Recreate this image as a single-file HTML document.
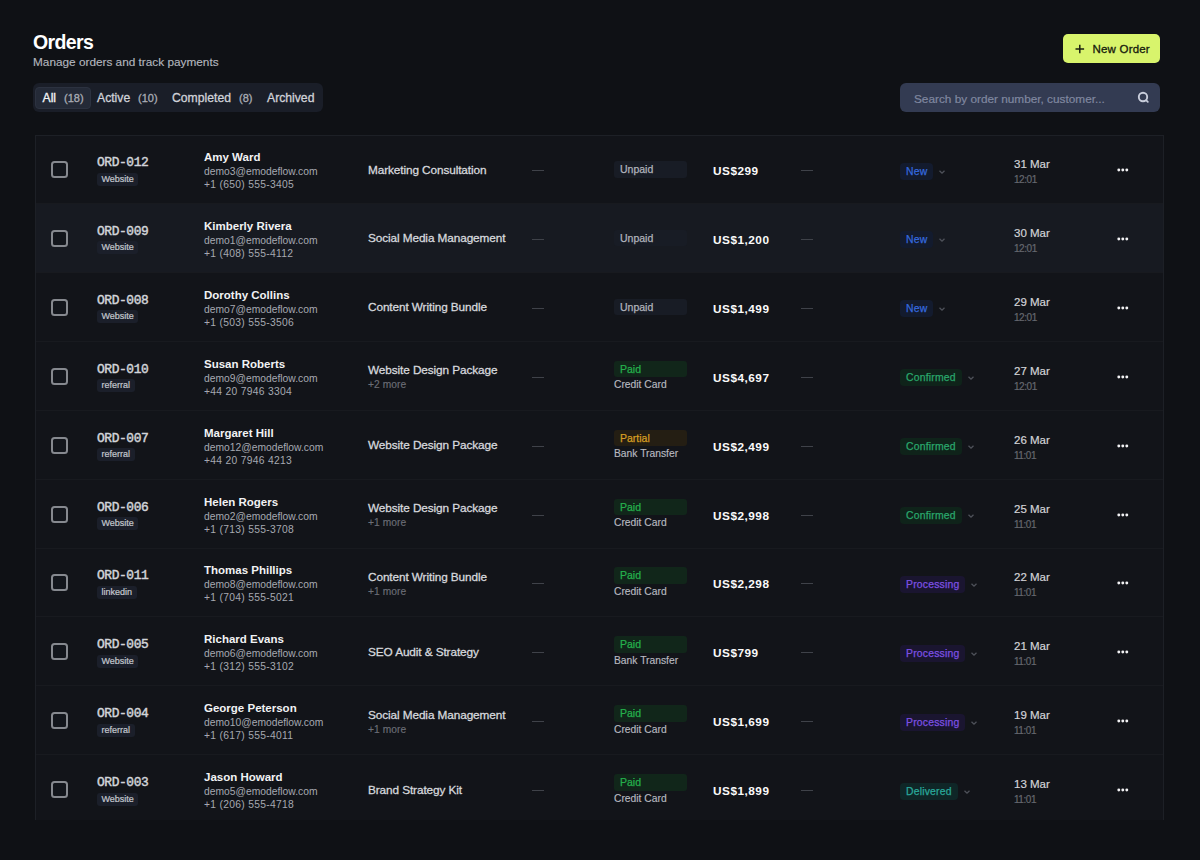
<!DOCTYPE html>
<html><head><meta charset="utf-8"><style>
*{margin:0;padding:0;box-sizing:border-box}
html,body{width:1200px;height:860px;overflow:hidden;background:#0f1115;font-family:"Liberation Sans",sans-serif;position:relative}
.title{position:absolute;left:33px;top:29.5px;font-size:19.5px;letter-spacing:-0.6px;font-weight:bold;color:#fff;line-height:24px}
.sub{position:absolute;left:33px;top:55px;font-size:11.8px;color:#b3b6bd;line-height:14px;-webkit-text-stroke:0.15px #b3b6bd}
.tabs{position:absolute;left:33px;top:83px;width:290px;height:29px;background:#1a1e28;border-radius:6px}
.tab{position:absolute;top:3px;height:23px;line-height:24px;font-size:12.2px;color:#d0d2d8;white-space:nowrap;-webkit-text-stroke:0.3px #d0d2d8}
.tab.active{top:4px;height:22px;background:#242a37;border:1px solid #2c3240;border-radius:4px;line-height:20px;color:#f4f5f7;-webkit-text-stroke:0.3px #f4f5f7}
.tc{color:#a9acb5;-webkit-text-stroke:0.3px #a9acb5;font-size:11px;position:absolute;top:0}
.btn{position:absolute;left:1063px;top:34px;width:96.5px;height:29px;background:#d8f46c;border-radius:5px}
.btn span{position:absolute;left:29.5px;top:8px;font-size:11.5px;letter-spacing:0.2px;line-height:15px;color:#161a0c;-webkit-text-stroke:0.3px #161a0c}
.search{position:absolute;left:900px;top:83px;width:260px;height:29px;background:#333b52;border-radius:6px}
.search span{position:absolute;left:14px;top:9px;font-size:11.8px;line-height:14px;color:#8088a0;-webkit-text-stroke:0.2px #8088a0}
.table{position:absolute;left:35px;top:135px;width:1129px;height:685px;border:1px solid #1d2026;border-bottom:none;overflow:hidden;background:#121419}
.row{position:absolute;left:-1px;width:1128px;height:69px;border-bottom:1px solid #181a1f}
.in{position:absolute;left:0;top:1px;width:1128px;height:69px}
.row.hover{background:#171a21}
.cb{position:absolute;left:16px;top:25px;width:17px;height:17px;border:2px solid #86898f;border-radius:3.5px;background:#13161c}
.oid{position:absolute;left:62px;top:20px;font-family:"Liberation Mono",monospace;font-weight:normal;font-size:12.9px;letter-spacing:-0.4px;line-height:14px;color:#d2d4d9;-webkit-text-stroke:0.45px #d2d4d9}
.src{position:absolute;left:62px;top:36.5px;height:13px;padding:0 4.5px;font-size:9px;line-height:13.5px;color:#c4c7ce;-webkit-text-stroke:0.2px #c4c7ce;background:#1b1f2a;border-radius:3px}
.cust{position:absolute;left:169px;top:14px}
.nm{font-size:11.5px;font-weight:bold;color:#f1f2f4;line-height:15px}
.em{font-size:10.3px;color:#a6a9b1;line-height:13px}
.ph{font-size:10.3px;color:#a6a9b1;line-height:13.5px;letter-spacing:0.3px}
.prod{position:absolute;left:333px;top:26.5px;font-size:11.8px;letter-spacing:-0.1px;line-height:14px;color:#d6d8dd;white-space:nowrap;-webkit-text-stroke:0.3px #d6d8dd}
.prod.two{top:20.5px}
.more{font-size:10.2px;letter-spacing:0.1px;color:#6b6e76;line-height:16px;-webkit-text-stroke:0.15px #6b6e76}
.dash{position:absolute;top:34px;width:12px;height:1px;background:#3f4249}
.d1{left:497px}.d2{left:766px}
.pay{position:absolute;left:579px;top:25px}
.pay.two{top:18px}
.pb{display:block;width:73px;height:16px;border-radius:3px;font-size:10.5px;line-height:16.5px;height:16.5px;padding-left:6px;-webkit-text-stroke:0.25px currentColor}
.pb.unpaid{background:#181c25;color:#b0b3bb}
.pb.paid{background:#11261a;color:#25b04c}
.pb.partial{background:#241e13;color:#d69f22}
.method{font-size:10.3px;line-height:14px;color:#b8bac0;margin-top:1px;-webkit-text-stroke:0.15px #b8bac0}
.amt{position:absolute;left:678px;top:28px;font-size:11.8px;letter-spacing:0.5px;font-weight:bold;color:#fafafa;line-height:15px}
.st{position:absolute;left:865px;top:26.5px;height:18px;white-space:nowrap}
.sb{display:inline-block;height:17px;line-height:18px;font-size:10.4px;letter-spacing:0.2px;padding:0 6px;border-radius:4px;vertical-align:top;-webkit-text-stroke:0.25px currentColor}
.sb.new{background:#131b2e;color:#3569de}
.sb.confirmed{background:#0f231a;color:#2aa76c}
.sb.processing{background:#1a1530;color:#7d50e2}
.sb.delivered{background:#0f2627;color:#2aa89a}
.chev{display:inline-block;vertical-align:top;margin-top:6px;margin-left:5px}
.dt{position:absolute;left:979px;top:22px}
.date{font-size:11.5px;color:#d2d3d7;line-height:13px;-webkit-text-stroke:0.2px #d2d3d7}
.time{font-size:10px;letter-spacing:-0.45px;color:#65686f;line-height:17.5px;-webkit-text-stroke:0.2px #65686f}
.dots{position:absolute;left:1080px;top:31px}

</style></head><body>
<div class="title">Orders</div>
<div class="sub">Manage orders and track payments</div>
<div class="tabs">
<div class="tab active" style="left:2px;width:56px"><span class="tl" style="position:absolute;left:6.5px">All</span><span class="tc" style="left:28px">(18)</span></div>
<div class="tab" style="left:64px"><span class="tl">Active</span><span class="tc" style="left:41px">(10)</span></div>
<div class="tab" style="left:139px"><span class="tl">Completed</span><span class="tc" style="left:67px">(8)</span></div>
<div class="tab" style="left:234px"><span class="tl">Archived</span></div>
</div>
<div class="btn"><svg width="10" height="10" viewBox="0 0 10 10" style="position:absolute;left:12px;top:9.5px"><path d="M4.8 0.7V9.3M0.5 5H9.1" stroke="#1a1f10" stroke-width="1.5"/></svg><span>New Order</span></div>
<div class="search"><span>Search by order number, customer...</span><svg width="14" height="14" viewBox="0 0 14 14" style="position:absolute;left:237px;top:8px"><circle cx="6" cy="6" r="4.2" fill="none" stroke="#c9cedc" stroke-width="1.9"/><path d="M9.3 9.3L10.8 10.8" stroke="#c9cedc" stroke-width="1.8" stroke-linecap="round"/></svg></div>
<div class="table">
<div class="row" style="top:-1.0px"><div class="in">
<div class="cb"></div>
<div class="oid">ORD-012</div><div class="src">Website</div>
<div class="cust"><div class="nm">Amy Ward</div><div class="em">demo3@emodeflow.com</div><div class="ph">+1 (650) 555-3405</div></div>
<div class="prod">Marketing Consultation</div>
<div class="dash d1"></div>
<div class="pay"><span class="pb unpaid">Unpaid</span></div>
<div class="amt">US$299</div>
<div class="dash d2"></div>
<div class="st"><span class="sb new">New</span><svg class="chev" width="8" height="6" viewBox="0 0 8 6"><path d="M1.5 1.8 L4 4.2 L6.5 1.8" fill="none" stroke="#4f525a" stroke-width="1.3"/></svg></div>
<div class="dt"><div class="date">31 Mar</div><div class="time">12:01</div></div>
<svg class="dots" width="14" height="6" viewBox="0 0 14 6"><circle cx="3.8" cy="3" r="1.45" fill="#f2f2f4"/><circle cx="7.8" cy="3" r="1.45" fill="#f2f2f4"/><circle cx="11.8" cy="3" r="1.45" fill="#f2f2f4"/></svg>
</div></div><div class="row hover" style="top:67.9px"><div class="in">
<div class="cb"></div>
<div class="oid">ORD-009</div><div class="src">Website</div>
<div class="cust"><div class="nm">Kimberly Rivera</div><div class="em">demo1@emodeflow.com</div><div class="ph">+1 (408) 555-4112</div></div>
<div class="prod">Social Media Management</div>
<div class="dash d1"></div>
<div class="pay"><span class="pb unpaid">Unpaid</span></div>
<div class="amt">US$1,200</div>
<div class="dash d2"></div>
<div class="st"><span class="sb new">New</span><svg class="chev" width="8" height="6" viewBox="0 0 8 6"><path d="M1.5 1.8 L4 4.2 L6.5 1.8" fill="none" stroke="#4f525a" stroke-width="1.3"/></svg></div>
<div class="dt"><div class="date">30 Mar</div><div class="time">12:01</div></div>
<svg class="dots" width="14" height="6" viewBox="0 0 14 6"><circle cx="3.8" cy="3" r="1.45" fill="#f2f2f4"/><circle cx="7.8" cy="3" r="1.45" fill="#f2f2f4"/><circle cx="11.8" cy="3" r="1.45" fill="#f2f2f4"/></svg>
</div></div><div class="row" style="top:136.8px"><div class="in">
<div class="cb"></div>
<div class="oid">ORD-008</div><div class="src">Website</div>
<div class="cust"><div class="nm">Dorothy Collins</div><div class="em">demo7@emodeflow.com</div><div class="ph">+1 (503) 555-3506</div></div>
<div class="prod">Content Writing Bundle</div>
<div class="dash d1"></div>
<div class="pay"><span class="pb unpaid">Unpaid</span></div>
<div class="amt">US$1,499</div>
<div class="dash d2"></div>
<div class="st"><span class="sb new">New</span><svg class="chev" width="8" height="6" viewBox="0 0 8 6"><path d="M1.5 1.8 L4 4.2 L6.5 1.8" fill="none" stroke="#4f525a" stroke-width="1.3"/></svg></div>
<div class="dt"><div class="date">29 Mar</div><div class="time">12:01</div></div>
<svg class="dots" width="14" height="6" viewBox="0 0 14 6"><circle cx="3.8" cy="3" r="1.45" fill="#f2f2f4"/><circle cx="7.8" cy="3" r="1.45" fill="#f2f2f4"/><circle cx="11.8" cy="3" r="1.45" fill="#f2f2f4"/></svg>
</div></div><div class="row" style="top:205.7px"><div class="in">
<div class="cb"></div>
<div class="oid">ORD-010</div><div class="src">referral</div>
<div class="cust"><div class="nm">Susan Roberts</div><div class="em">demo9@emodeflow.com</div><div class="ph">+44 20 7946 3304</div></div>
<div class="prod two">Website Design Package<div class="more">+2 more</div></div>
<div class="dash d1"></div>
<div class="pay two"><span class="pb paid">Paid</span><div class="method">Credit Card</div></div>
<div class="amt">US$4,697</div>
<div class="dash d2"></div>
<div class="st"><span class="sb confirmed">Confirmed</span><svg class="chev" width="8" height="6" viewBox="0 0 8 6"><path d="M1.5 1.8 L4 4.2 L6.5 1.8" fill="none" stroke="#4f525a" stroke-width="1.3"/></svg></div>
<div class="dt"><div class="date">27 Mar</div><div class="time">12:01</div></div>
<svg class="dots" width="14" height="6" viewBox="0 0 14 6"><circle cx="3.8" cy="3" r="1.45" fill="#f2f2f4"/><circle cx="7.8" cy="3" r="1.45" fill="#f2f2f4"/><circle cx="11.8" cy="3" r="1.45" fill="#f2f2f4"/></svg>
</div></div><div class="row" style="top:274.6px"><div class="in">
<div class="cb"></div>
<div class="oid">ORD-007</div><div class="src">referral</div>
<div class="cust"><div class="nm">Margaret Hill</div><div class="em">demo12@emodeflow.com</div><div class="ph">+44 20 7946 4213</div></div>
<div class="prod">Website Design Package</div>
<div class="dash d1"></div>
<div class="pay two"><span class="pb partial">Partial</span><div class="method">Bank Transfer</div></div>
<div class="amt">US$2,499</div>
<div class="dash d2"></div>
<div class="st"><span class="sb confirmed">Confirmed</span><svg class="chev" width="8" height="6" viewBox="0 0 8 6"><path d="M1.5 1.8 L4 4.2 L6.5 1.8" fill="none" stroke="#4f525a" stroke-width="1.3"/></svg></div>
<div class="dt"><div class="date">26 Mar</div><div class="time">11:01</div></div>
<svg class="dots" width="14" height="6" viewBox="0 0 14 6"><circle cx="3.8" cy="3" r="1.45" fill="#f2f2f4"/><circle cx="7.8" cy="3" r="1.45" fill="#f2f2f4"/><circle cx="11.8" cy="3" r="1.45" fill="#f2f2f4"/></svg>
</div></div><div class="row" style="top:343.5px"><div class="in">
<div class="cb"></div>
<div class="oid">ORD-006</div><div class="src">Website</div>
<div class="cust"><div class="nm">Helen Rogers</div><div class="em">demo2@emodeflow.com</div><div class="ph">+1 (713) 555-3708</div></div>
<div class="prod two">Website Design Package<div class="more">+1 more</div></div>
<div class="dash d1"></div>
<div class="pay two"><span class="pb paid">Paid</span><div class="method">Credit Card</div></div>
<div class="amt">US$2,998</div>
<div class="dash d2"></div>
<div class="st"><span class="sb confirmed">Confirmed</span><svg class="chev" width="8" height="6" viewBox="0 0 8 6"><path d="M1.5 1.8 L4 4.2 L6.5 1.8" fill="none" stroke="#4f525a" stroke-width="1.3"/></svg></div>
<div class="dt"><div class="date">25 Mar</div><div class="time">11:01</div></div>
<svg class="dots" width="14" height="6" viewBox="0 0 14 6"><circle cx="3.8" cy="3" r="1.45" fill="#f2f2f4"/><circle cx="7.8" cy="3" r="1.45" fill="#f2f2f4"/><circle cx="11.8" cy="3" r="1.45" fill="#f2f2f4"/></svg>
</div></div><div class="row" style="top:412.4px"><div class="in">
<div class="cb"></div>
<div class="oid">ORD-011</div><div class="src">linkedin</div>
<div class="cust"><div class="nm">Thomas Phillips</div><div class="em">demo8@emodeflow.com</div><div class="ph">+1 (704) 555-5021</div></div>
<div class="prod two">Content Writing Bundle<div class="more">+1 more</div></div>
<div class="dash d1"></div>
<div class="pay two"><span class="pb paid">Paid</span><div class="method">Credit Card</div></div>
<div class="amt">US$2,298</div>
<div class="dash d2"></div>
<div class="st"><span class="sb processing">Processing</span><svg class="chev" width="8" height="6" viewBox="0 0 8 6"><path d="M1.5 1.8 L4 4.2 L6.5 1.8" fill="none" stroke="#4f525a" stroke-width="1.3"/></svg></div>
<div class="dt"><div class="date">22 Mar</div><div class="time">11:01</div></div>
<svg class="dots" width="14" height="6" viewBox="0 0 14 6"><circle cx="3.8" cy="3" r="1.45" fill="#f2f2f4"/><circle cx="7.8" cy="3" r="1.45" fill="#f2f2f4"/><circle cx="11.8" cy="3" r="1.45" fill="#f2f2f4"/></svg>
</div></div><div class="row" style="top:481.3px"><div class="in">
<div class="cb"></div>
<div class="oid">ORD-005</div><div class="src">Website</div>
<div class="cust"><div class="nm">Richard Evans</div><div class="em">demo6@emodeflow.com</div><div class="ph">+1 (312) 555-3102</div></div>
<div class="prod">SEO Audit &amp; Strategy</div>
<div class="dash d1"></div>
<div class="pay two"><span class="pb paid">Paid</span><div class="method">Bank Transfer</div></div>
<div class="amt">US$799</div>
<div class="dash d2"></div>
<div class="st"><span class="sb processing">Processing</span><svg class="chev" width="8" height="6" viewBox="0 0 8 6"><path d="M1.5 1.8 L4 4.2 L6.5 1.8" fill="none" stroke="#4f525a" stroke-width="1.3"/></svg></div>
<div class="dt"><div class="date">21 Mar</div><div class="time">11:01</div></div>
<svg class="dots" width="14" height="6" viewBox="0 0 14 6"><circle cx="3.8" cy="3" r="1.45" fill="#f2f2f4"/><circle cx="7.8" cy="3" r="1.45" fill="#f2f2f4"/><circle cx="11.8" cy="3" r="1.45" fill="#f2f2f4"/></svg>
</div></div><div class="row" style="top:550.2px"><div class="in">
<div class="cb"></div>
<div class="oid">ORD-004</div><div class="src">referral</div>
<div class="cust"><div class="nm">George Peterson</div><div class="em">demo10@emodeflow.com</div><div class="ph">+1 (617) 555-4011</div></div>
<div class="prod two">Social Media Management<div class="more">+1 more</div></div>
<div class="dash d1"></div>
<div class="pay two"><span class="pb paid">Paid</span><div class="method">Credit Card</div></div>
<div class="amt">US$1,699</div>
<div class="dash d2"></div>
<div class="st"><span class="sb processing">Processing</span><svg class="chev" width="8" height="6" viewBox="0 0 8 6"><path d="M1.5 1.8 L4 4.2 L6.5 1.8" fill="none" stroke="#4f525a" stroke-width="1.3"/></svg></div>
<div class="dt"><div class="date">19 Mar</div><div class="time">11:01</div></div>
<svg class="dots" width="14" height="6" viewBox="0 0 14 6"><circle cx="3.8" cy="3" r="1.45" fill="#f2f2f4"/><circle cx="7.8" cy="3" r="1.45" fill="#f2f2f4"/><circle cx="11.8" cy="3" r="1.45" fill="#f2f2f4"/></svg>
</div></div><div class="row" style="top:619.1px"><div class="in">
<div class="cb"></div>
<div class="oid">ORD-003</div><div class="src">Website</div>
<div class="cust"><div class="nm">Jason Howard</div><div class="em">demo5@emodeflow.com</div><div class="ph">+1 (206) 555-4718</div></div>
<div class="prod">Brand Strategy Kit</div>
<div class="dash d1"></div>
<div class="pay two"><span class="pb paid">Paid</span><div class="method">Credit Card</div></div>
<div class="amt">US$1,899</div>
<div class="dash d2"></div>
<div class="st"><span class="sb delivered">Delivered</span><svg class="chev" width="8" height="6" viewBox="0 0 8 6"><path d="M1.5 1.8 L4 4.2 L6.5 1.8" fill="none" stroke="#4f525a" stroke-width="1.3"/></svg></div>
<div class="dt"><div class="date">13 Mar</div><div class="time">11:01</div></div>
<svg class="dots" width="14" height="6" viewBox="0 0 14 6"><circle cx="3.8" cy="3" r="1.45" fill="#f2f2f4"/><circle cx="7.8" cy="3" r="1.45" fill="#f2f2f4"/><circle cx="11.8" cy="3" r="1.45" fill="#f2f2f4"/></svg>
</div></div>
</div>
</body></html>
